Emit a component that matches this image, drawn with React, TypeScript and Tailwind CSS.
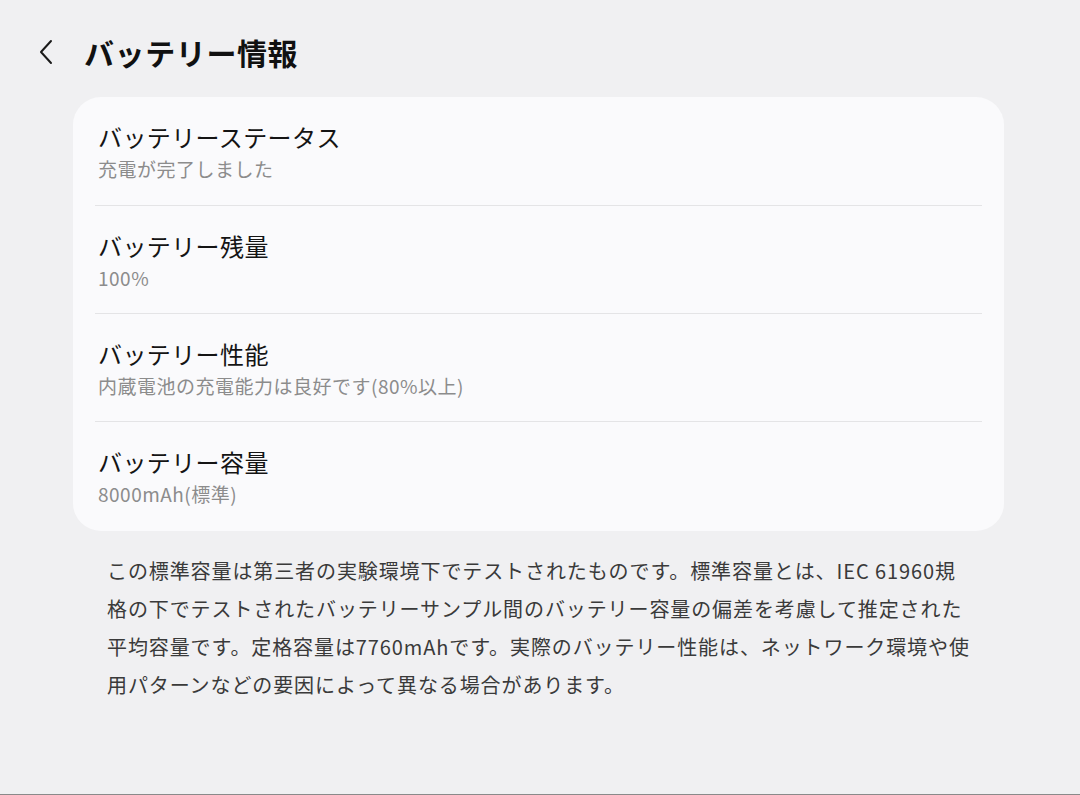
import React from "react";

const font = { fontFamily: '"Noto Sans CJK JP", "Noto Sans", sans-serif' };

const rows = [
    { title: "バッテリーステータス", sub: "充電が完了しました" },
    { title: "バッテリー残量", sub: "100%" },
    { title: "バッテリー性能", sub: "内蔵電池の充電能力は良好です(80%以上)" },
    { title: "バッテリー容量", sub: "8000mAh(標準)" },
];

const note = [
    "この標準容量は第三者の実験環境下でテストされたものです。標準容量とは、IEC 61960規",
    "格の下でテストされたバッテリーサンプル間のバッテリー容量の偏差を考慮して推定された",
    "平均容量です。定格容量は7760mAhです。実際のバッテリー性能は、ネットワーク環境や使",
    "用パターンなどの要因によって異なる場合があります。",
];

export default function App() {
    return (
        <div className="w-[1080px] h-[795px] bg-[#f0f0f2] border-b border-[#8a8a8a] overflow-hidden" style={font}>
            {/* ヘッダー */}
            <div className="flex items-center pt-[32px] pl-[36px]">
                <svg width="22" height="26" viewBox="0 0 22 26" className="text-[#1a1a1a]">
                    <path d="M15 2 L5 13 L15 24" fill="none" stroke="currentColor" strokeWidth="2" strokeLinecap="round" strokeLinejoin="round" />
                </svg>
                <h1 className="ml-[26px] text-[30px] leading-[40px] font-bold text-[#111] tracking-[0.6px]">バッテリー情報</h1>
            </div>

            {/* カード */}
            <div className="mt-[25px] ml-[73px] w-[931px] bg-[#fafafc] rounded-[28px] px-[22px]">
                {rows.map((r, i) => (
                    <div
                        key={r.title}
                        className={`pl-[3px] pt-[24px] ${
                            i === 0 ? "pb-[20px]" : i === rows.length - 1 ? "pb-[21px] border-t border-[#e4e4e6]" : "pb-[19px] border-t border-[#e4e4e6]"
                        }`}
                    >
                        <div className="text-[24px] leading-[32px] text-[#141414] tracking-[0.4px]">{r.title}</div>
                        <div className="text-[19px] leading-[32px] text-[#8c8c8c] tracking-[0.5px]">{r.sub}</div>
                    </div>
                ))}
            </div>

            {/* 注記 */}
            <div className="mt-[21px] pl-[107px] text-[20px] leading-[38px] text-[#3a3a3a] tracking-[0.9px]">
                {note.map((l) => (
                    <div key={l} className="whitespace-nowrap">{l}</div>
                ))}
            </div>
        </div>
    );
}
